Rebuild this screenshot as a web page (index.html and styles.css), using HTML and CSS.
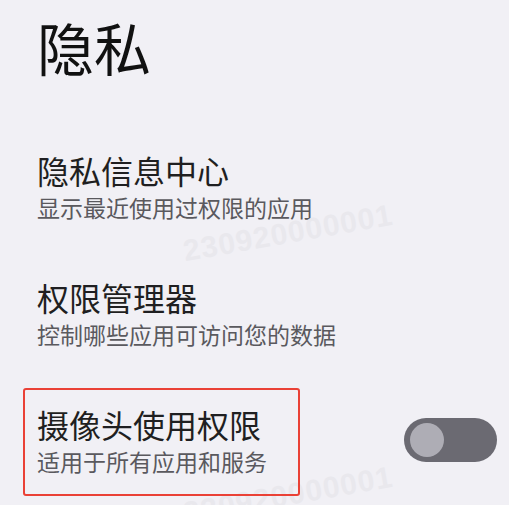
FILE: index.html
```html
<!DOCTYPE html>
<html lang="zh-CN">
<head>
    <meta charset="UTF-8">
    <meta name="viewport" content="width=device-width, initial-scale=1.0">
    <title>隐私</title>
    <link rel="stylesheet" href="styles.css">
</head>
<body>
    <!-- watermark text -->
    <div class="watermark wm-top">230920000001</div>
    <div class="watermark wm-bottom">230920000001</div>

    <div class="page">
        <h1 class="page-title">隐私</h1>

        <div class="setting-row">
            <div class="setting-text">
                <div class="setting-title">隐私信息中心</div>
                <div class="setting-desc">显示最近使用过权限的应用</div>
            </div>
        </div>

        <div class="setting-row">
            <div class="setting-text">
                <div class="setting-title">权限管理器</div>
                <div class="setting-desc">控制哪些应用可访问您的数据</div>
            </div>
        </div>

        <div class="setting-row">
            <div class="setting-text highlighted">
                <div class="setting-title">摄像头使用权限</div>
                <div class="setting-desc">适用于所有应用和服务</div>
            </div>
            <div class="switch">
                <div class="switch-knob"></div>
            </div>
        </div>
    </div>
</body>
</html>
```

FILE: styles.css
```css
/* Global styles */
body {
    margin: 0;
    padding: 0;
    background-color: #f1f0f5;
    font-family: "Noto Sans CJK SC", "Noto Sans", sans-serif;
    overflow: hidden;
    height: 505px;
    position: relative;
}

.page {
    padding: 13px 12px 0 37px;
}

/* Page heading */
.page-title {
    margin: 0 0 71px 0;
    font-size: 57px;
    font-weight: 400;
    line-height: 66px;
    color: #111;
}

/* Setting rows */
.setting-row {
    display: flex;
    align-items: center;
    justify-content: space-between;
    margin-bottom: 55px;
}

.setting-title {
    font-size: 32px;
    line-height: 40px;
    color: #1f1f21;
}

.setting-desc {
    margin-top: 2px;
    font-size: 23px;
    line-height: 30px;
    color: #5a595e;
}

/* Red annotation box */
.highlighted {
    position: relative;
}

.highlighted::after {
    content: "";
    position: absolute;
    top: -16px;
    left: -14px;
    right: -33px;
    height: 108px;
    box-sizing: border-box;
    border: 2px solid #ea4136;
    border-radius: 3px;
}

/* Toggle switch */
.switch {
    width: 93px;
    height: 44px;
    border-radius: 22px;
    background-color: #6b6a72;
    display: flex;
    align-items: center;
    padding-left: 6px;
    box-sizing: border-box;
}

.switch-knob {
    width: 34px;
    height: 34px;
    border-radius: 50%;
    background-color: #aeadb5;
}

/* Watermark */
.watermark {
    position: absolute;
    font-family: "Liberation Sans", sans-serif;
    font-size: 30px;
    font-weight: bold;
    color: #e9e8ed;
    letter-spacing: 1px;
    transform: rotate(-10deg);
    white-space: nowrap;
}

.wm-top {
    top: 216px;
    left: 182px;
}

.wm-bottom {
    top: 478px;
    left: 182px;
}
```
